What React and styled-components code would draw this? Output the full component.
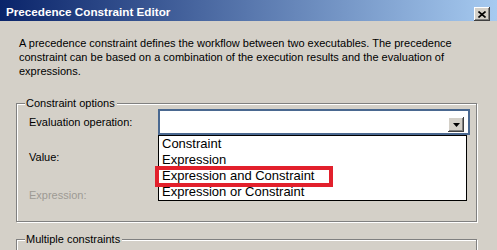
import React from "react";
import styled, { createGlobalStyle } from "styled-components";

const GlobalStyle = createGlobalStyle`
  html, body {
    margin: 0;
    padding: 0;
    background: #d4d0c8;
    overflow: hidden;
  }
  body {
    font-family: "Liberation Sans", Arial, sans-serif;
    font-size: 11px;
    color: #000;
  }
`;

const Window = styled.div`
  width: 497px;
  height: 250px;
  display: flex;
  flex-direction: column;
  background: #d4d0c8;
  overflow: hidden;
`;

const TitleBar = styled.div`
  height: 22px;
  box-sizing: border-box;
  padding: 5px 7px 0 6px;
  display: flex;
  justify-content: space-between;
  align-items: flex-start;
  background: linear-gradient(to right, #0a246a 0%, #a6caf0 100%);
`;

const Title = styled.span`
  color: #fff;
  font-weight: bold;
  font-size: 11.7px;
  line-height: 14px;
`;

const RaisedButton = styled.button`
  box-sizing: border-box;
  padding: 0;
  margin: 0;
  border: none;
  background: #d4d0c8;
  display: flex;
  align-items: center;
  justify-content: center;
  box-shadow: inset -1px -1px 0 #404040, inset 1px 1px 0 #fff,
    inset -2px -2px 0 #808080;
  font-family: inherit;
`;

const CloseButton = styled(RaisedButton)`
  width: 16px;
  height: 14px;
  margin-top: 2px;
`;

const Body = styled.div`
  padding: 15px 20px 0 16px;
  display: flex;
  flex-direction: column;
`;

const Description = styled.p`
  margin: 0 0 0 3px;
  line-height: 14px;
`;

const Group = styled.fieldset`
  margin: ${(p) => p.$gap}px 0 0 0;
  padding: 0 6px 20px 12px;
  min-width: 0;
  border: 1px solid #808080;
  box-shadow: inset 1px 1px 0 #fff, 1px 1px 0 #fff;
`;

const Legend = styled.legend`
  margin-left: -4px;
  padding: 0 2px 0 1px;
  line-height: 12px;
  background: #d4d0c8;
`;

const Form = styled.div`
  display: grid;
  grid-template-columns: 129px 1fr;
  grid-template-rows: 26px 22px 22px;
  row-gap: 11px;
`;

const Label = styled.div`
  display: flex;
  align-items: ${(p) => (p.$disabled ? "flex-end" : "center")};
  color: ${(p) => (p.$disabled ? "#9d9a94" : "#000")};
`;

const ComboWrap = styled.div`
  position: relative;
`;

const Combo = styled.div`
  height: 26px;
  box-sizing: border-box;
  border: 2px solid #4a6890;
  background: #fff;
  display: flex;
  justify-content: flex-end;
  align-items: flex-end;
  padding: 0 4px 1px 0;
`;

const ArrowButton = styled(RaisedButton)`
  width: 16px;
  height: 15px;
`;

const DropList = styled.ul`
  position: absolute;
  top: 100%;
  left: 0;
  width: 309px;
  box-sizing: border-box;
  margin: 0;
  padding: 0;
  list-style: none;
  border: 1px solid #000;
  background: #fff;
  z-index: 2;
`;

const Option = styled.li`
  position: relative;
  height: 16px;
  line-height: 16px;
  padding-left: 3px;
  font-size: 13px;
  white-space: nowrap;
`;

const Highlight = styled.span`
  position: absolute;
  left: -4px;
  top: -2px;
  width: 178px;
  height: 21px;
  box-sizing: border-box;
  border: 4px solid #e2202c;
`;

const Controls = styled.div`
  display: flex;
  justify-content: flex-end;
  gap: 7px;
  padding-right: 6px;
`;

const FieldButton = styled(RaisedButton)`
  width: ${(p) => p.$w}px;
  height: 22px;
  font-size: 11px;
`;

const options = [
  "Constraint",
  "Expression",
  "Expression and Constraint",
  "Expression or Constraint",
];

export default function App() {
  return (
    <>
      <GlobalStyle />
      <Window>
        <TitleBar>
          <Title>Precedence Constraint Editor</Title>
          <CloseButton aria-label="Close">
            <svg width="8" height="7" viewBox="0 0 8 7">
              <path d="M0.5 0.5 L7.5 6.5 M7.5 0.5 L0.5 6.5" stroke="#000" strokeWidth="1.6" />
            </svg>
          </CloseButton>
        </TitleBar>
        <Body>
          <Description>
            A precedence constraint defines the workflow between two executables. The precedence
            <br />
            constraint can be based on a combination of the execution results and the evaluation of
            <br />
            expressions.
          </Description>

          <Group $gap={19}>
            <Legend>Constraint options</Legend>
            <Form>
              <Label>Evaluation operation:</Label>
              <ComboWrap>
                <Combo>
                  <ArrowButton aria-label="Open">
                    <svg width="7" height="4" viewBox="0 0 7 4">
                      <path d="M0 0 H7 L3.5 4 Z" fill="#000" />
                    </svg>
                  </ArrowButton>
                </Combo>
                <DropList>
                  {options.map((o, i) => (
                    <Option key={o}>
                      {o}
                      {i === 2 && <Highlight />}
                    </Option>
                  ))}
                </DropList>
              </ComboWrap>

              <Label>Value:</Label>
              <div />

              <Label $disabled>Expression:</Label>
              <Controls>
                <FieldButton $w={28} />
                <FieldButton $w={73} />
              </Controls>
            </Form>
          </Group>

          <Group $gap={11}>
            <Legend>Multiple constraints</Legend>
            <Form />
          </Group>
        </Body>
      </Window>
    </>
  );
}
